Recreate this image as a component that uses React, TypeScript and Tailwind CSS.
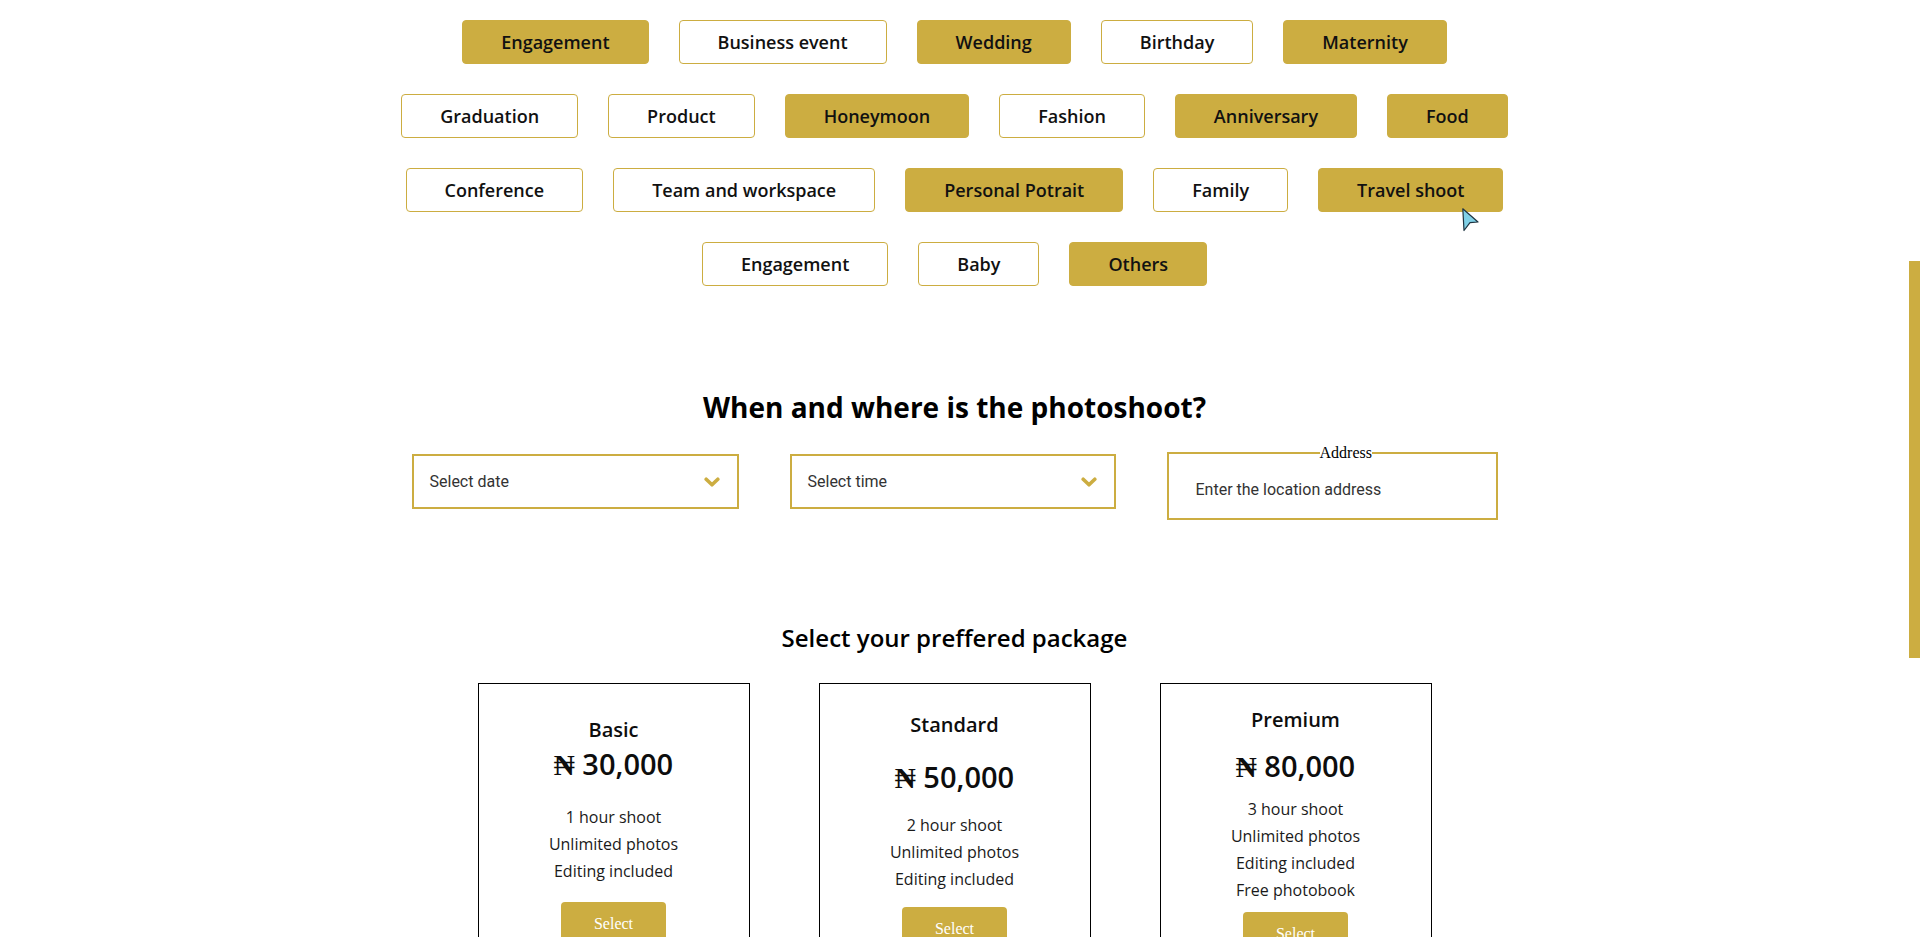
import React from "react";

type Cat = { label: string; filled: boolean };

const rows: Cat[][] = [
  [
    { label: "Engagement", filled: true },
    { label: "Business event", filled: false },
    { label: "Wedding", filled: true },
    { label: "Birthday", filled: false },
    { label: "Maternity", filled: true },
  ],
  [
    { label: "Graduation", filled: false },
    { label: "Product", filled: false },
    { label: "Honeymoon", filled: true },
    { label: "Fashion", filled: false },
    { label: "Anniversary", filled: true },
    { label: "Food", filled: true },
  ],
  [
    { label: "Conference", filled: false },
    { label: "Team and workspace", filled: false },
    { label: "Personal Potrait", filled: true },
    { label: "Family", filled: false },
    { label: "Travel shoot", filled: true },
  ],
  [
    { label: "Engagement", filled: false },
    { label: "Baby", filled: false },
    { label: "Others", filled: true },
  ],
];

function CatButton({ label, filled }: Cat) {
  return (
    <button
      className={
        filled
          ? "h-[44px] px-[38px] rounded-[4px] border border-[#ccad41] bg-[#ccad41] text-[18px] font-semibold text-[#111111] leading-none"
          : "h-[44px] px-[38px] rounded-[4px] border border-[#ccad41] bg-white text-[18px] font-semibold text-[#111111] leading-none"
      }
    >
      {label}
    </button>
  );
}

function Chevron() {
  return (
    <svg width="16" height="10" viewBox="0 0 16 10" className="text-[#ccad41]">
      <path
        d="M2.2 2.2 L8 7.8 L13.8 2.2"
        fill="none"
        stroke="currentColor"
        strokeWidth="3.6"
        strokeLinecap="round"
        strokeLinejoin="round"
      />
    </svg>
  );
}

function Naira({ amount }: { amount: string }) {
  return (
    <span>
      <span className="font-['Liberation_Serif','DejaVu_Serif',serif] font-bold">₦</span> {amount}
    </span>
  );
}

function SelectButton({ cls }: { cls: string }) {
  return (
    <button
      className={
        "h-[44px] w-[105px] shrink-0 rounded-[4px] bg-[#ccad41] text-white text-[16px] font-['Liberation_Serif',serif] " +
        cls
      }
    >
      Select
    </button>
  );
}

export default function App() {
  return (
    <div className="relative flex h-[937px] w-full overflow-hidden bg-white font-['Open_Sans',sans-serif] text-[#0d0d0d]">
      <main className="flex flex-1 flex-col items-center">
        {/* Categories */}
        <div className="flex flex-col items-center gap-[30px] pt-[20px]">
          {rows.map((row, i) => (
            <div key={i} className="flex justify-center gap-[30px]">
              {row.map((c, j) => (
                <CatButton key={j} label={c.label} filled={c.filled} />
              ))}
            </div>
          ))}
        </div>

        {/* When and where */}
        <h2 className="mt-[102.5px] text-[28px] font-bold leading-[36px] text-black">
          When and where is the photoshoot?
        </h2>
        <div className="mt-[19px] flex items-center gap-[51px] font-['Roboto',sans-serif]">
          <div className="flex h-[55px] w-[327px] items-center justify-between border-2 border-[#ccad41] pl-[16px] pr-[17px]">
            <span className="text-[16px] text-[#333333]">Select date</span>
            <Chevron />
          </div>
          <div className="flex h-[55px] w-[326px] items-center justify-between border-2 border-[#ccad41] pl-[16px] pr-[17px]">
            <span className="text-[16px] text-[#333333]">Select time</span>
            <Chevron />
          </div>
          <fieldset className="w-[331px] border-2 border-[#ccad41] px-[27px]">
            <legend className="ml-[124px] px-0 text-[16px] leading-[18px] text-black font-['Liberation_Serif',serif]">
              Address
            </legend>
            <div className="flex h-[56px] items-center">
              <span className="text-[16px] text-[#333333]">Enter the location address</span>
            </div>
          </fieldset>
        </div>

        {/* Packages */}
        <h3 className="mt-[103px] text-[24px] font-semibold leading-[30px] text-black">
          Select your preffered package
        </h3>
        <div className="mt-[30px] flex gap-[69px]">
          {/* Basic */}
          <div className="flex h-[320px] w-[272px] flex-col items-center border border-black pt-[32px]">
            <div className="text-[20px] font-semibold leading-[28px]">Basic</div>
            <div className="mt-[0px] text-[29px] font-semibold leading-[40px]">
              <Naira amount="30,000" />
            </div>
            <ul className="mt-[19.5px] text-center text-[16px] leading-[27px] text-[#1a1a1a]">
              <li>1 hour shoot</li>
              <li>Unlimited photos</li>
              <li>Editing included</li>
            </ul>
            <SelectButton cls="mt-[17px]" />
          </div>

          {/* Standard */}
          <div className="flex h-[320px] w-[272px] flex-col items-center border border-black pt-[27px]">
            <div className="text-[20px] font-semibold leading-[28px]">Standard</div>
            <div className="mt-[18px] text-[29px] font-semibold leading-[40px]">
              <Naira amount="50,000" />
            </div>
            <ul className="mt-[14.5px] text-center text-[16px] leading-[27px] text-[#1a1a1a]">
              <li>2 hour shoot</li>
              <li>Unlimited photos</li>
              <li>Editing included</li>
            </ul>
            <SelectButton cls="mt-[14px]" />
          </div>

          {/* Premium */}
          <div className="flex h-[320px] w-[272px] flex-col items-center border border-black pt-[22px]">
            <div className="text-[20px] font-semibold leading-[28px]">Premium</div>
            <div className="mt-[12.5px] text-[29px] font-semibold leading-[40px]">
              <Naira amount="80,000" />
            </div>
            <ul className="mt-[8.5px] text-center text-[16px] leading-[27px] text-[#1a1a1a]">
              <li>3 hour shoot</li>
              <li>Unlimited photos</li>
              <li>Editing included</li>
              <li>Free photobook</li>
            </ul>
            <SelectButton cls="mt-[8.5px]" />
          </div>
        </div>
      </main>

      {/* scrollbar */}
      <div className="flex w-[11px] flex-col bg-white">
        <div className="h-[261px]" />
        <div className="h-[397px] bg-[#ccad41]" />
      </div>

      {/* mouse pointer */}
      <svg
        className="pointer-events-none absolute left-[1462px] top-[208px]"
        width="18"
        height="24"
        viewBox="0 0 18 24"
      >
        <path
          d="M0.8 0.8 L16 14 L8 14.6 L2 22.5 Z"
          fill="#7fd0e6"
          stroke="#1f3340"
          strokeWidth="1.2"
          strokeLinejoin="round"
        />
      </svg>
    </div>
  );
}
